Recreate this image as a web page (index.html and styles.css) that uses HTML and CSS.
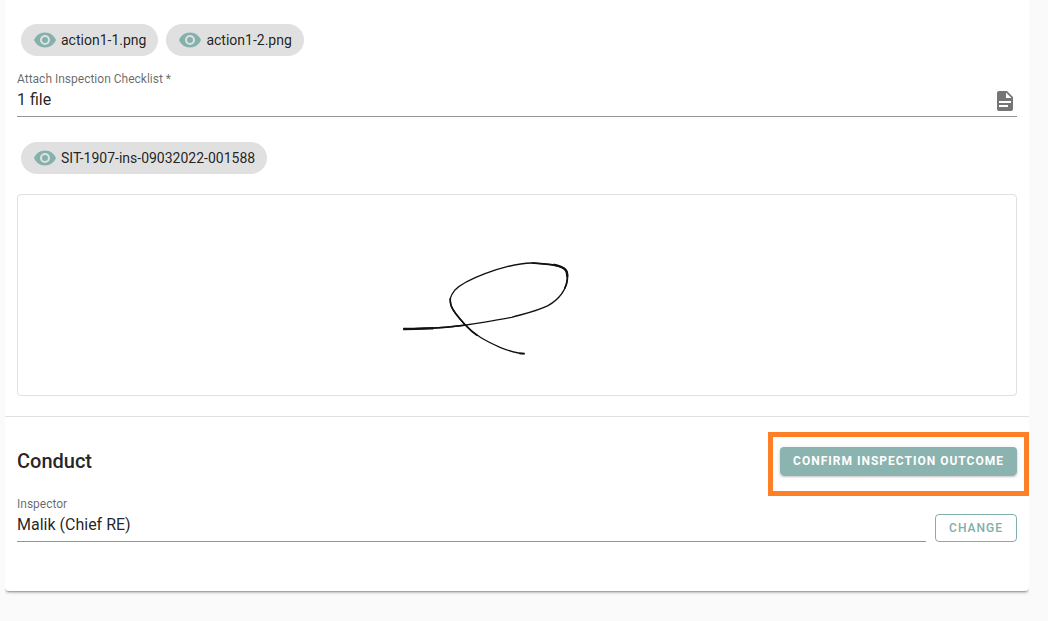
FILE: index.html
```html
<!DOCTYPE html>
<html lang="en">
<head>
<meta charset="utf-8">
<title>Inspection</title>
<link rel="stylesheet" href="styles.css">
</head>
<body>
<svg class="defs" aria-hidden="true">
  <symbol id="eye" viewBox="0 0 24 24"><path d="M12 9a3 3 0 0 0-3 3 3 3 0 0 0 3 3 3 3 0 0 0 3-3 3 3 0 0 0-3-3m0 8a5 5 0 0 1-5-5 5 5 0 0 1 5-5 5 5 0 0 1 5 5 5 5 0 0 1-5 5m0-12.500C7 4.500 2.730 7.610 1 12c1.730 4.390 6 7.500 11 7.500s9.270-3.110 11-7.500c-1.730-4.390-6-7.500-11-7.500z"/></symbol>
</svg>
<main class="card">
  <section class="section attachments">
    <div class="chips">
      <a class="chip" href="#"><svg class="icon"><use href="#eye"/></svg>action1-1.png</a>
      <a class="chip" href="#"><svg class="icon"><use href="#eye"/></svg>action1-2.png</a>
    </div>
    <div class="field">
      <label class="label" for="checklist">Attach Inspection Checklist *</label>
      <div class="control">
        <input class="input" id="checklist" type="text" value="1 file" readonly>
        <button class="file-button" type="button" aria-label="Attach file">
          <svg class="icon" viewBox="0 0 24 24"><path d="M13 9h5.500L13 3.500V9M6 2h8l6 6v12a2 2 0 0 1-2 2H6a2 2 0 0 1-2-2V4c0-1.110.890-2 2-2m9 16v-2H6v2h9m3-4v-2H6v2h12z"/></svg>
        </button>
      </div>
    </div>
    <div class="chips chips-spaced">
      <a class="chip" href="#"><svg class="icon"><use href="#eye"/></svg>SIT-1907-ins-09032022-001588</a>
    </div>
    <div class="signature">
      <svg class="signature-drawing" viewBox="0 0 998 200" role="img" aria-label="Signature">
        <g transform="translate(372 55) scale(.33333)">
          <path class="ink" d="M40 237C105 236 165 234 228 225C280 217 325 210 365 202C400 192 440 184 474 167C508 147 528 120 532 88C533 66 531 58 514 51C490 42 460 41 425 39C380 40 320 57 285 71C245 86 215 99 194 121C180 139 178 148 184 169C190 186 206 203 226 225C255 256 285 272 330 292C355 302 380 311 404 311"/>
          <path class="ink ink-mid" d="M425 39C460 41 490 42 514 51C531 58 533 66 532 88C531 98 528 108 524 116M181 145C180 152 181 160 184 169C190 186 206 203 226 225C238 238 249 248 262 257M40 237C105 236 165 234 228 225M388 310L404 311"/>
          <path class="ink ink-heavy" d="M40 237C75 237 100 236 130 235M490 44C500 46 508 48 514 51C528 57 532 64 532 80"/>
        </g>
      </svg>
    </div>
  </section>
  <section class="section conduct">
    <header class="heading-row">
      <h2 class="heading">Conduct</h2>
      <div class="highlight"><button class="button button-filled" type="button">CONFIRM INSPECTION OUTCOME</button></div>
    </header>
    <div class="inspector-row">
      <div class="field">
        <label class="label" for="inspector">Inspector</label>
        <div class="control"><input class="input" id="inspector" type="text" value="Malik (Chief RE)" readonly></div>
      </div>
      <button class="button button-outlined" type="button">CHANGE</button>
    </div>
  </section>
</main>
</body>
</html>
```
FILE: styles.css
```css
* { box-sizing: border-box; }
body {
  display: flow-root;
  margin: 0 19px 0 5px;
  padding-bottom: 30px;
  background: #fafafa;
  color: rgba(0, 0, 0, .87);
  font-family: Roboto, sans-serif;
}
.defs { position: absolute; width: 0; height: 0; }
.card {
  margin-top: -8px;
  padding-top: 8px;
  background: #fff;
  border-radius: 4px;
  box-shadow: 0 3px 1px -2px rgba(0, 0, 0, .2), 0 2px 2px 0 rgba(0, 0, 0, .14), 0 1px 5px 0 rgba(0, 0, 0, .12);
}
.section { padding: 0 12px; }
.attachments {
  padding-top: 24px;
  padding-bottom: 20px;
  border-bottom: 1px solid #e0e0e0;
}
.chips { display: flex; gap: 8px; padding: 0 4px; }
.chips-spaced { margin: 25px 0 20px; }
.chip {
  display: flex;
  align-items: center;
  gap: 4px;
  height: 32px;
  padding: 0 12px;
  border-radius: 16px;
  background: #e0e0e0;
  color: rgba(0, 0, 0, .87);
  font-size: 14px;
  line-height: 20px;
  text-decoration: none;
  white-space: nowrap;
}
.icon { display: block; width: 24px; height: 24px; fill: currentColor; }
.chip .icon { color: #85b1ad; }
.field { flex: 1; min-width: 0; }
.attachments .field { margin-top: 13px; }
.label {
  display: block;
  height: 20px;
  color: rgba(0, 0, 0, .6);
  font-size: 12px;
  line-height: 20px;
}
.control {
  display: flex;
  height: 28px;
  border-bottom: 1px solid #949494;
}
.input {
  flex: 1;
  min-width: 0;
  height: 22px;
  padding: 0;
  border: 0;
  outline: 0;
  background: transparent;
  color: rgba(0, 0, 0, .87);
  font: 16px/22px Roboto, sans-serif;
}
.file-button {
  height: 22px;
  padding: 0;
  border: 0;
  background: transparent;
  color: #757575;
}
.signature { border: 1px solid #e0e0e0; border-radius: 4px; }
.signature-drawing { display: block; width: 100%; }
.ink { fill: none; stroke: #111; stroke-width: 4; stroke-linecap: butt; stroke-linejoin: round; }
.ink-mid { stroke-width: 5; }
.ink-heavy { stroke-width: 7; }
.conduct { padding-top: 28px; padding-bottom: 49px; }
.heading-row { display: flex; align-items: center; justify-content: space-between; height: 32px; }
.heading { margin: 0; font-size: 20px; font-weight: 500; line-height: 32px; }
.highlight { position: relative; }
.highlight::after {
  content: "";
  position: absolute;
  inset: -15px -12px -21px;
  border: 5px solid #ff7f27;
  pointer-events: none;
}
.button {
  display: block;
  height: 28px;
  padding: 0 13px;
  border-radius: 4px;
  font: 500 12px/16px Roboto, sans-serif;
  letter-spacing: 1px;
  white-space: nowrap;
}
.button-filled {
  border: 0;
  background: #8bb3af;
  color: #fff;
  font-weight: 700;
  box-shadow: 0 3px 1px -2px rgba(0, 0, 0, .2), 0 2px 2px 0 rgba(0, 0, 0, .14), 0 1px 5px 0 rgba(0, 0, 0, .12);
}
.button-outlined { border: 1px solid #80aea9; background: transparent; color: #80aea9; }
.inspector-row { display: flex; align-items: flex-end; gap: 9px; margin-top: 17px; }
```
